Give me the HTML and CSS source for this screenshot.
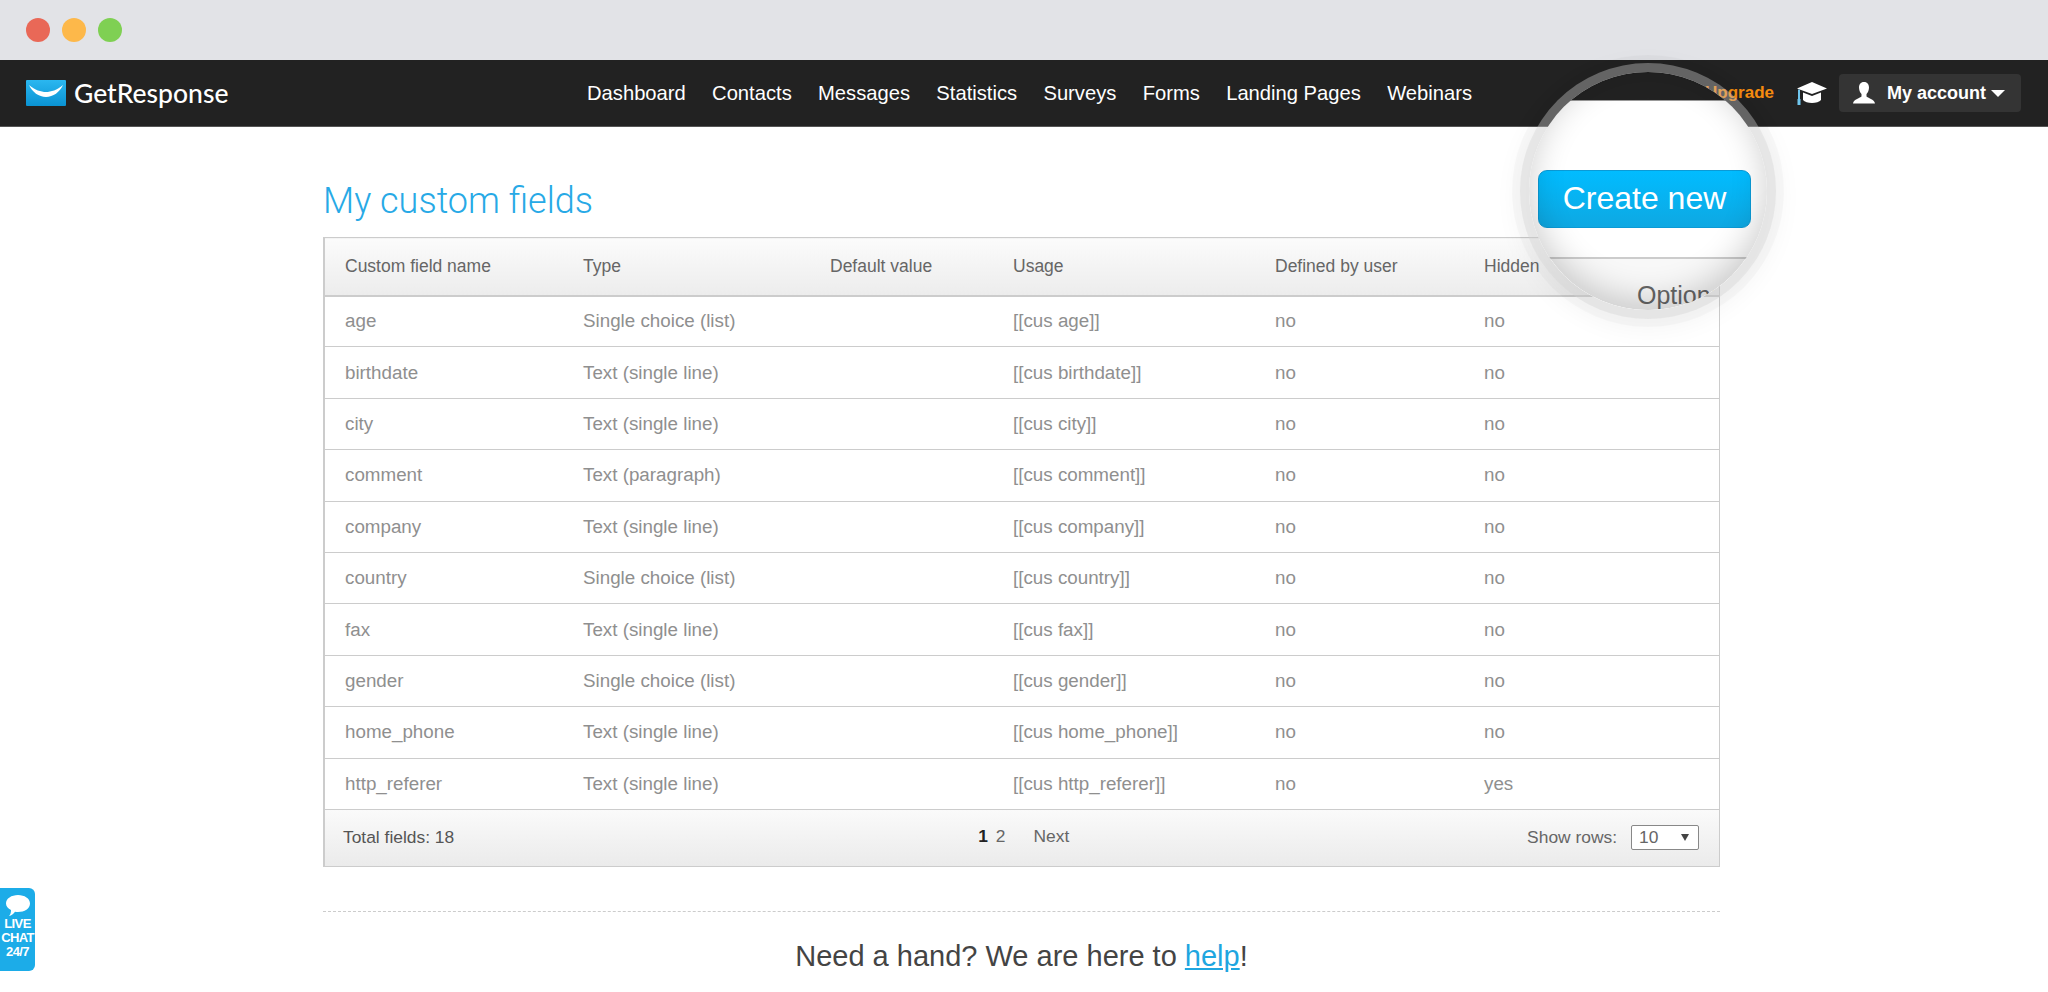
FILE: index.html
```html
<!DOCTYPE html>
<html lang="en">
<head>
  <meta charset="UTF-8" />
  <title>My custom fields</title>
  <link rel="stylesheet" href="styles.css">
</head>
<body>

<div class="window-bar">
  <span class="dot dot-red"></span>
  <span class="dot dot-yellow"></span>
  <span class="dot dot-green"></span>
</div>

<header class="top-nav">
  <a class="logo" href="#">
    <svg class="logo-mark" viewBox="0 0 40 26" width="40" height="26">
      <defs>
        <linearGradient id="logoBlue" x1="0" y1="0" x2="0" y2="1">
          <stop offset="0" stop-color="#2bb7f0"/>
          <stop offset="1" stop-color="#0a93d3"/>
        </linearGradient>
      </defs>
      <rect width="40" height="26" rx="1" fill="url(#logoBlue)"/>
      <path d="M3 5C6 12 13 17 20 17S34 12 37 5C31 10 25 12 20 12S9 10 3 5Z" fill="#fff"/>
    </svg>
    <span class="logo-text">GetResponse</span>
  </a>
  <nav class="main-links">
    <a href="#">Dashboard</a>
    <a href="#">Contacts</a>
    <a href="#">Messages</a>
    <a href="#">Statistics</a>
    <a href="#">Surveys</a>
    <a href="#">Forms</a>
    <a href="#">Landing Pages</a>
    <a href="#">Webinars</a>
  </nav>
  <div class="nav-right">
    <a class="upgrade" href="#">Upgrade</a>
    <svg class="cap-icon" viewBox="0 0 30 23" width="30" height="23">
      <path d="M15 0L30 6.500L15 12L0 6.500Z" fill="#fff"/>
      <path d="M6 10.500L15 14L24 10.500V18C21 22 9 22 6 18Z" fill="#fff"/>
      <path d="M2 7.500V18" stroke="#6fc6ee" stroke-width="2" fill="none"/>
      <rect x="0.500" y="17" width="3" height="6" fill="#6fc6ee"/>
    </svg>
    <a class="account" href="#">
      <svg class="user-icon" viewBox="0 0 24 24" width="24" height="24">
        <path d="M12 1c3.500 0 5 2.500 5 5.500 0 2.500-1 5-2.500 6.500v2.500c1 1.500 8 2.500 8.500 7H1c.5-4.500 7.500-5.500 8.500-7V13C8 11.500 7 9 7 6.500 7 3.500 8.500 1 12 1Z" fill="#fff"/>
      </svg>
      <span>My account</span>
      <span class="caret"></span>
    </a>
  </div>
</header>

<main class="content">
  <h1 class="page-title">My custom fields</h1>

  <table class="fields-table">
    <thead>
      <tr>
        <th class="col-name">Custom field name</th>
        <th class="col-type">Type</th>
        <th class="col-default">Default value</th>
        <th class="col-usage">Usage</th>
        <th class="col-defined">Defined by user</th>
        <th>Hidden</th>
      </tr>
    </thead>
    <tbody>
      <tr><td>age</td><td>Single choice (list)</td><td></td><td>[[cus age]]</td><td>no</td><td>no</td></tr>
      <tr><td>birthdate</td><td>Text (single line)</td><td></td><td>[[cus birthdate]]</td><td>no</td><td>no</td></tr>
      <tr><td>city</td><td>Text (single line)</td><td></td><td>[[cus city]]</td><td>no</td><td>no</td></tr>
      <tr><td>comment</td><td>Text (paragraph)</td><td></td><td>[[cus comment]]</td><td>no</td><td>no</td></tr>
      <tr><td>company</td><td>Text (single line)</td><td></td><td>[[cus company]]</td><td>no</td><td>no</td></tr>
      <tr><td>country</td><td>Single choice (list)</td><td></td><td>[[cus country]]</td><td>no</td><td>no</td></tr>
      <tr><td>fax</td><td>Text (single line)</td><td></td><td>[[cus fax]]</td><td>no</td><td>no</td></tr>
      <tr><td>gender</td><td>Single choice (list)</td><td></td><td>[[cus gender]]</td><td>no</td><td>no</td></tr>
      <tr><td>home_phone</td><td>Text (single line)</td><td></td><td>[[cus home_phone]]</td><td>no</td><td>no</td></tr>
      <tr><td>http_referer</td><td>Text (single line)</td><td></td><td>[[cus http_referer]]</td><td>no</td><td>yes</td></tr>
    </tbody>
  </table>

  <div class="table-footer">
    <span class="total">Total fields: 18</span>
    <div class="pager">
      <b>1</b>
      <a href="#">2</a>
      <a class="next" href="#">Next</a>
    </div>
    <div class="show-rows">
      <span>Show rows:</span>
      <span class="select-box">10<i class="select-arrow"></i></span>
    </div>
  </div>

  <p class="help-line">Need a hand? We are here to <a href="#">help</a>!</p>
</main>

<div class="lens">
  <div class="lens-nav"></div>
  <a class="create-btn" href="#">Create new</a>
  <div class="lens-head">Options</div>
</div>

<a class="live-chat" href="#">
  <svg viewBox="0 0 24 22" width="24" height="22">
    <path d="M12 0c6.500 0 12 3.500 12 8.500S18.500 17 12 17c-1 0-2 0-3-.3C7.500 19 5.500 20.500 3 21c1.500-1.500 2-3.500 2-6C2 13.500 0 11.500 0 8.500 0 3.500 5.500 0 12 0Z" fill="#fff"/>
  </svg>
  <span>LIVE<br>CHAT<br>24/7</span>
</a>

</body>
</html>
```

FILE: styles.css
```css
html, body {
  margin: 0;
  padding: 0;
}

body {
  font-family: "Liberation Sans", Arial, sans-serif;
  background: #fff;
  color: #444;
  height: 992px;
  overflow: hidden;
  position: relative;
}

a {
  text-decoration: none;
  color: inherit;
}

/* window chrome */
.window-bar {
  height: 60px;
  background: #e2e3e7;
  display: flex;
  align-items: center;
  gap: 12px;
  padding-left: 26px;
}

.dot {
  width: 24px;
  height: 24px;
  border-radius: 50%;
}

.dot-red { background: #e96857; }
.dot-yellow { background: #fdb84a; }
.dot-green { background: #7fd053; }

/* top nav */
.top-nav {
  height: 67px;
  background: #222;
  display: flex;
  align-items: center;
  border-bottom: 1px solid #555;
  box-sizing: border-box;
  color: #fff;
}

.logo {
  display: flex;
  align-items: center;
  gap: 8px;
  margin-left: 26px;
  width: 561px;
}

.logo-text {
  font-family: Lato, sans-serif;
  font-size: 26.500px;
  font-weight: 500;
}

.main-links {
  display: flex;
  gap: 26.300px;
  font-size: 20.200px;
}

.nav-right {
  display: flex;
  align-items: center;
  margin-left: auto;
  margin-right: 27px;
}

.upgrade {
  color: #f58b0f;
  font-weight: bold;
  font-size: 17px;
}

.cap-icon {
  margin-left: 23px;
  margin-right: 12px;
}

.account {
  display: flex;
  align-items: center;
  width: 182px;
  height: 38px;
  box-sizing: border-box;
  padding-left: 13px;
  background: #343434;
  border-radius: 4px;
  font-size: 18px;
  font-weight: bold;
}

.user-icon {
  margin-right: 11px;
}

.caret {
  margin-left: 5px;
  border-left: 7px solid transparent;
  border-right: 7px solid transparent;
  border-top: 7px solid #fff;
}

/* main content */
.content {
  width: 1397px;
  margin-left: 323px;
}

.page-title {
  margin: 0;
  height: 110px;
  box-sizing: border-box;
  padding-top: 51px;
  font-family: Roboto, sans-serif;
  font-size: 36px;
  line-height: 46px;
  font-weight: 300;
  color: #27a9e6;
}

.fields-table {
  width: 100%;
  table-layout: fixed;
  border-collapse: collapse;
}

.fields-table th,
.fields-table td {
  padding: 0 0 0 20px;
  text-align: left;
  font-weight: normal;
  box-sizing: border-box;
}

.fields-table th {
  height: 58px;
  font-size: 17.500px;
  color: #666;
  background: linear-gradient(#fbfbfb, #ececec);
  border-top: 1px solid #ccc;
  border-bottom: 2px solid #ccc;
}

.fields-table td {
  height: 51.400px;
  font-size: 18.800px;
  color: #8f8f8f;
  border-bottom: 1px solid #ccc;
}

.fields-table tr > :first-child { border-left: 2px solid #ccc; }
.fields-table tr > :last-child { border-right: 1px solid #ccc; }

.col-name { width: 239px; }
.col-type { width: 247px; }
.col-default { width: 183px; }
.col-usage { width: 262px; }
.col-defined { width: 209px; }

.table-footer {
  height: 57px;
  box-sizing: border-box;
  display: flex;
  align-items: center;
  padding: 0 20px 0 18px;
  font-size: 17.400px;
  color: #555;
  background: linear-gradient(#fafafa, #ebebeb);
  border: 1px solid #ccc;
  border-top: none;
  border-left-width: 2px;
}

.pager {
  display: flex;
  gap: 8px;
  margin-left: 524px;
  margin-bottom: 3px;
  color: #666;
}

.pager b { color: #222; }
.pager .next { margin-left: 20px; }

.show-rows {
  display: flex;
  align-items: center;
  gap: 14px;
  margin-left: auto;
  color: #666;
}

.select-box {
  width: 68px;
  height: 25px;
  box-sizing: border-box;
  padding-left: 7px;
  display: flex;
  align-items: center;
  justify-content: space-between;
  padding-right: 9px;
  background: #fff;
  border: 1px solid #888;
  border-radius: 2px;
}

.select-arrow {
  border-left: 4px solid transparent;
  border-right: 4px solid transparent;
  border-top: 7px solid #444;
}

.help-line {
  margin: 44px 0 0;
  border-top: 1px dashed #ccc;
  padding-top: 26px;
  text-align: center;
  font-size: 29px;
  line-height: 36px;
  color: #444;
}

.help-line a {
  color: #1fa6e0;
  text-decoration: underline;
}

/* magnifier over the create button */
.lens {
  position: absolute;
  left: 1529px;
  top: 72px;
  width: 238px;
  height: 238px;
  border-radius: 50%;
  overflow: hidden;
  background: #fff;
  box-shadow: 0 0 0 9px rgba(210, 210, 210, 0.385),
    0 0 0 17px rgba(0, 0, 0, 0.025),
    0 6px 24px 14px rgba(0, 0, 0, 0.04);
}

.lens::after {
  content: "";
  position: absolute;
  inset: 0;
  border-radius: 50%;
  box-shadow: inset 0 -8px 34px rgba(0, 0, 0, 0.2);
}

.lens-nav {
  height: 28px;
  background: #222;
  border-bottom: 1px solid #999;
}

.create-btn {
  display: block;
  width: 213px;
  height: 58px;
  box-sizing: border-box;
  margin: 69px 0 0 9px;
  border: 1px solid #0b9ad6;
  border-radius: 9px;
  background: linear-gradient(#01bcff, #0ea8e2);
  color: #fff;
  font-size: 32px;
  line-height: 55px;
  text-align: center;
}

.lens-head {
  margin-top: 29px;
  height: 60px;
  box-sizing: border-box;
  padding: 22px 0 0 108px;
  border-top: 2px solid #ccc;
  background: #f8f8f8;
  color: #666;
  font-size: 25px;
  white-space: nowrap;
}

/* live chat tab */
.live-chat {
  position: absolute;
  left: 0;
  top: 888px;
  width: 35px;
  height: 83px;
  box-sizing: border-box;
  padding-top: 7px;
  display: flex;
  flex-direction: column;
  align-items: center;
  background: #1cace8;
  border-radius: 0 6px 6px 0;
  color: #fff;
  font-size: 13px;
  line-height: 14px;
  font-weight: bold;
  letter-spacing: -0.6px;
  text-align: center;
}
```
